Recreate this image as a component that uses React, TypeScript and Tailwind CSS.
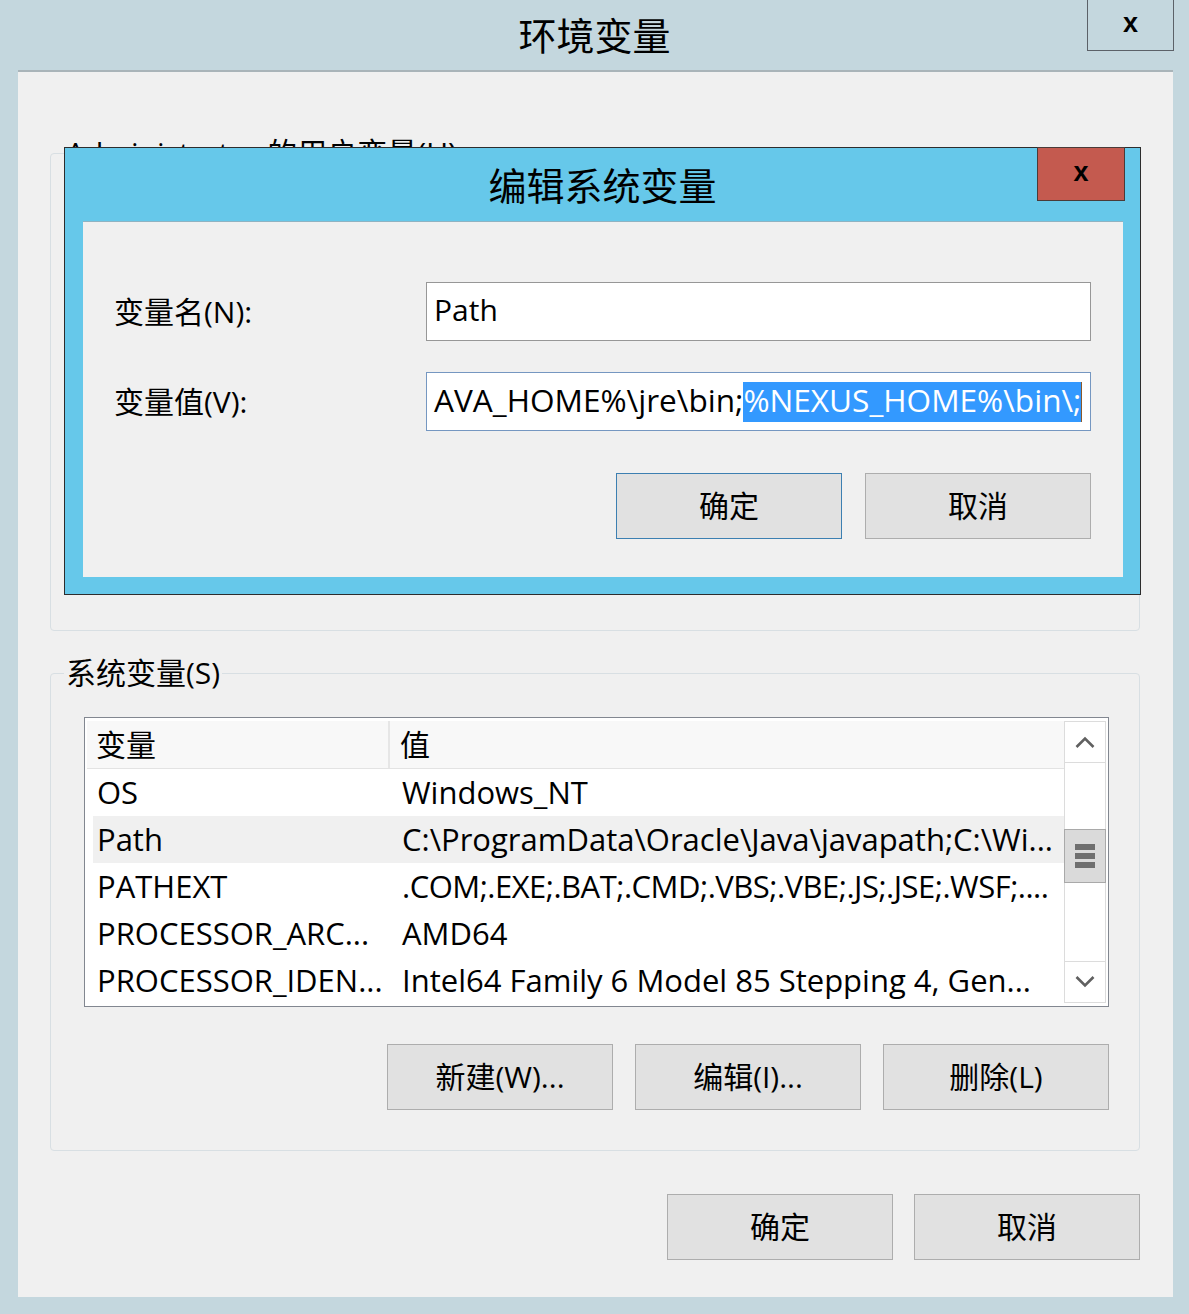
import React from "react";

interface Row {
  name: string;
  value: string;
  selected?: boolean;
  tight?: boolean;
}

const rows: Row[] = [
  { name: "OS", value: "Windows_NT" },
  { name: "Path", value: "C:\\ProgramData\\Oracle\\Java\\javapath;C:\\Wi...", selected: true },
  { name: "PATHEXT", value: ".COM;.EXE;.BAT;.CMD;.VBS;.VBE;.JS;.JSE;.WSF;....", tight: true },
  { name: "PROCESSOR_ARC...", value: "AMD64" },
  { name: "PROCESSOR_IDEN...", value: "Intel64 Family 6 Model 85 Stepping 4, Gen..." },
];

const WinButton: React.FC<{ label: string; primary?: boolean }> = ({ label, primary }) => (
  <button
    type="button"
    className={`w-[226px] h-[66px] bg-[#e1e1e1] border text-[30px] leading-none text-black flex items-center justify-center ${
      primary ? "border-[#3c7fb1]" : "border-[#adadad]"
    }`}
  >
    {label}
  </button>
);

const Chevron: React.FC<{ down?: boolean }> = ({ down }) => (
  <svg width="20" height="14" viewBox="0 0 20 14" className={down ? "rotate-180" : ""}>
    <polyline points="1.5,12 10,3.5 18.5,12" fill="none" stroke="#606060" strokeWidth="2.6" />
  </svg>
);

const ScrollBar = () => (
  <div className="w-[42px] h-full border border-[#dcdcdc] flex flex-col bg-white">
    <div className="h-[41px] border-b border-[#dcdcdc] flex items-center justify-center">
      <Chevron />
    </div>
    <div className="flex-1">
      <div className="mt-[66px] -mx-px h-[54px] bg-[#dadada] border border-[#a9a9a9] flex flex-col items-center justify-center gap-[3px]">
        <div className="w-[20px] h-[6px] bg-[#6e6e6e]" />
        <div className="w-[20px] h-[6px] bg-[#6e6e6e]" />
        <div className="w-[20px] h-[6px] bg-[#6e6e6e]" />
      </div>
    </div>
    <div className="h-[41px] border-t border-[#dcdcdc] flex items-center justify-center">
      <Chevron down />
    </div>
  </div>
);

const VariableList = () => (
  <div className="ml-[33px] mt-[29px] w-[1025px] h-[290px] border border-[#828790] bg-white flex pl-[2px] pr-[2px] py-[3px]">
    <div className="flex-1 overflow-hidden">
      <div className="h-[48px] flex bg-[#f8f8f8] border-b border-[#e3e3e3] text-[30px]">
        <div className="w-[303px] pl-[9px] flex items-center border-r-2 border-[#e6e6e6]">变量</div>
        <div className="flex-1 pl-[10px] flex items-center">值</div>
      </div>
      {rows.map((row) => (
        <div
          key={row.name}
          className={`ml-[6px] h-[47px] flex items-center text-[31px] whitespace-nowrap ${row.selected ? "bg-[#f0f0f0]" : ""}`}
        >
          <div className="w-[305px] pl-[4px] overflow-hidden">{row.name}</div>
          <div className={`flex-1 pl-[4px] overflow-hidden ${row.tight ? "tracking-[-0.5px]" : ""}`}>{row.value}</div>
        </div>
      ))}
    </div>
    <ScrollBar />
  </div>
);

const EditDialog = () => (
  <div className="absolute left-[64px] top-[147px] w-[1077px] h-[448px] border border-[#2d2d2d] bg-[#66c8ea] flex flex-col">
    <div className="relative h-[73px] flex items-center justify-center">
      <span className="text-[38px] leading-none">编辑系统变量</span>
      <div className="absolute right-[15px] -top-px w-[88px] h-[54px] bg-[#c45a4f] border border-[#4a3b39] flex items-center justify-center">
        <span className="font-['Liberation_Sans',sans-serif] font-bold text-[27px] leading-none -mt-[4px]">x</span>
      </div>
    </div>
    <div className="ml-[18px] mr-[17px] h-[356px] bg-[#f0f0f0] border-t border-[#8fb3c2] pl-[31px] pr-[32px] pt-[60px]">
      <div className="flex items-center h-[59px]">
        <div className="w-[312px] text-[30px]">变量名(N):</div>
        <div className="flex-1 h-full bg-white border border-[#979797] pl-[7px] pb-[4px] flex items-center text-[30px]">
          Path
        </div>
      </div>
      <div className="flex items-center h-[59px] mt-[31px]">
        <div className="w-[312px] text-[30px]">变量值(V):</div>
        <div className="flex-1 h-full bg-white border border-[#7597c1] pl-[7px] flex items-center text-[31.6px] whitespace-nowrap overflow-hidden">
          <span className="pb-[4px]">AVA_HOME%\jre\bin;</span>
          <span className="h-[40px] bg-[#3399ff] text-white flex items-center pb-[4px]">%NEXUS_HOME%\bin\;</span>
          <span className="w-px h-[40px] bg-[#8a5a2c]" />
        </div>
      </div>
      <div className="flex justify-end gap-[23px] mt-[42px]">
        <WinButton label="确定" primary />
        <WinButton label="取消" />
      </div>
    </div>
  </div>
);

export default function App() {
  return (
    <div className="relative w-[1189px] h-[1314px] bg-[#c4d7de] text-black font-['Open_Sans','Noto_Sans_CJK_SC',sans-serif] overflow-hidden">
      <div className="h-[70px] grid grid-cols-[1fr_auto_1fr] items-center">
        <div />
        <span className="text-[38px] leading-none">环境变量</span>
        <div className="self-start justify-self-end mr-[15px] w-[87px] h-[51px] border border-t-0 border-[#5c6168] flex items-center justify-center">
          <span className="font-['Liberation_Sans',sans-serif] font-bold text-[27px] leading-none -mt-[4px]">x</span>
        </div>
      </div>

      <div className="ml-[18px] w-[1155px] h-[1227px] bg-[#f0f0f0] border-t-2 border-[#a9b4b9] pl-[32px] flex flex-col">
        <fieldset className="mt-[66px] w-[1090px] h-[493px] border border-[#d8dfe3] rounded-[4px]">
          <legend className="ml-[13px] px-[2px] text-[30px] leading-[30px]">Administrator 的用户变量(U)</legend>
        </fieldset>

        <fieldset className="mt-[27px] w-[1090px] h-[493px] border border-[#d8dfe3] rounded-[4px]">
          <legend className="ml-[13px] px-[2px] text-[30px] leading-[30px]">系统变量(S)</legend>
          <VariableList />
          <div className="flex justify-end gap-[22px] mt-[37px] pr-[30px]">
            <WinButton label="新建(W)..." />
            <WinButton label="编辑(I)..." />
            <WinButton label="删除(L)" />
          </div>
        </fieldset>

        <div className="flex justify-end gap-[21px] mt-[43px] w-[1090px]">
          <WinButton label="确定" />
          <WinButton label="取消" />
        </div>
      </div>

      <EditDialog />
    </div>
  );
}
